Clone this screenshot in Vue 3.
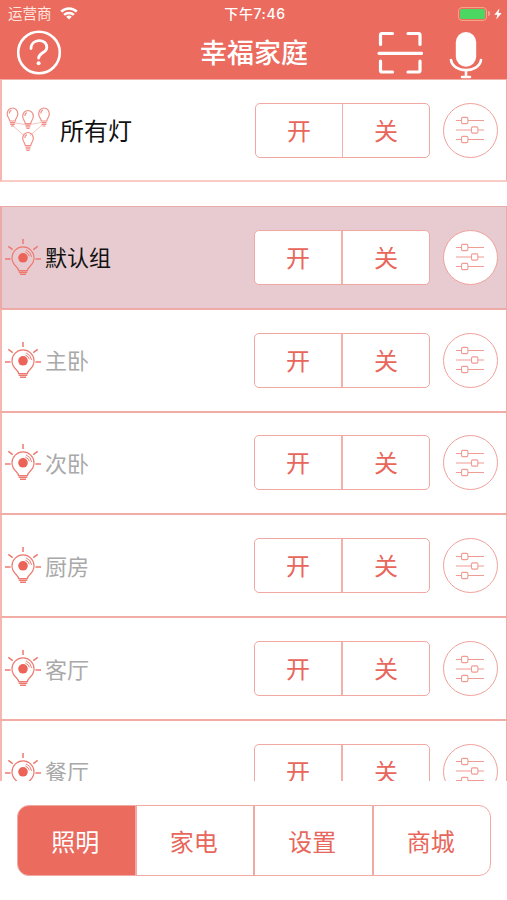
<template>
    <div class="app">
        <header class="header">
            <div class="status">
                <div class="status__left">
                    <span class="carrier">运营商</span>
                    <svg class="wifi" viewBox="0 0 18 13">
                        <path d="M1.2 4.7a11 11 0 0 1 15.6 0" />
                        <path d="M4.1 7.9a7 7 0 0 1 9.8 0" />
                        <path class="solid" d="M6.2 9.8a4 4 0 0 1 5.6 0L9 12.6z" />
                    </svg>
                </div>
                <span class="status__time">下午7:46</span>
                <div class="status__right">
                    <div class="battery"><div class="battery__level"></div></div>
                    <div class="battery-cap"></div>
                    <svg class="bolt" viewBox="0 0 8 12">
                        <path d="M5.4 0.5 0.3 6.8h3L2.3 11.5 7.7 5H4.6z" />
                    </svg>
                </div>
            </div>
            <div class="navbar">
                <svg class="help" viewBox="0 0 46 46">
                    <circle cx="23" cy="22.5" r="20.8" />
                    <path class="mark" d="M15 18.6C15 8.2 30.8 8 30.8 17.4C30.8 23 22.6 22.6 22.6 28.2" />
                    <circle class="dot" cx="22.6" cy="33.2" r="2" />
                </svg>
                <h1 class="title">幸福家庭</h1>
                <svg class="scan" viewBox="0 0 46 44">
                    <path d="M3.5 13.5V4q0-1.5 1.5-1.5h10.5M31 2.5h10.5q1.5 0 1.5 1.5v9.5M3.5 30v9.5q0 1.5 1.5 1.5h10.5M31 41h10.5q1.5 0 1.5-1.5V30M2 22.3h42.5" />
                </svg>
                <svg class="mic" viewBox="0 0 34 48">
                    <rect x="6.8" y="1" width="20.4" height="34.8" rx="10.2" />
                    <path d="M2 29c2.2 13.5 27.8 13.5 30 0M17 39.5V45.5M13 46h8" />
                </svg>
            </div>
        </header>

        <section class="row row--all">
            <svg class="bulbs" viewBox="0 0 46 46">
                <path class="links" d="M8 15.5 22 18M22 18 36 15.5M7 18 19 28.5M37 18 25 28.5" />
                <g v-for="(b, i) in bulbs" :key="i" :transform="`translate(${b.x} ${b.y})`">
                    <path class="glass" d="M-2.8 10.5C-2.8 7.8-5.3 7-5.3 3.3a5.3 5.8 0 0 1 10.6 0C5.3 7 2.8 7.8 2.8 10.5z" />
                    <path class="glass" d="M-2.6 12.2h5.2M-2.3 13.9h4.6M-1.5 15.5h3M-3.2 3Q-3.2.4-1.2-.4" />
                </g>
            </svg>
            <span class="name">所有灯</span>
            <div class="switch">
                <button class="switch__item">开</button>
                <button class="switch__item">关</button>
            </div>
            <button class="adjust">
                <svg viewBox="0 0 28 28">
                    <path d="M0 4.5h5.5M12 4.5h16M0 14h15.5M22 14h6M0 23.5h5.5M12 23.5h16" />
                    <rect x="5.5" y="1.4" width="6.4" height="6.2" rx="1.3" />
                    <rect x="15.5" y="10.9" width="6.4" height="6.2" rx="1.3" />
                    <rect x="5.5" y="20.4" width="6.4" height="6.2" rx="1.3" />
                </svg>
            </button>
        </section>

        <main class="groups">
            <section
                v-for="group in groups"
                :key="group"
                class="row"
                :class="{ selected: group === current }"
                @click="current = group"
            >
                <svg class="bulb" viewBox="0 0 36 37">
                    <path class="rays" d="M18 0v5M0 20h5.6M30.4 20H36M3.3 7.4l4.4 3.2M32.7 7.4l-4.4 3.2" />
                    <path d="M13.6 31.7C13.6 27.8 7 26.5 7 18.9a11 11 0 0 1 22 0C29 26.5 22.4 27.8 22.4 31.7z" />
                    <path class="base" d="M13.7 33.2h8.6M15 35.2h6" />
                    <path class="shine" d="M21 10.9q4.8 1.8 5.6 7M20.4 13.1q3.2 1.2 4 4.2" />
                    <circle class="core" cx="18" cy="18.8" r="4.8" />
                </svg>
                <span class="name">{{ group }}</span>
                <div class="switch">
                    <button class="switch__item">开</button>
                    <button class="switch__item">关</button>
                </div>
                <button class="adjust">
                    <svg viewBox="0 0 28 28">
                        <path d="M0 4.5h5.5M12 4.5h16M0 14h15.5M22 14h6M0 23.5h5.5M12 23.5h16" />
                        <rect x="5.5" y="1.4" width="6.4" height="6.2" rx="1.3" />
                        <rect x="15.5" y="10.9" width="6.4" height="6.2" rx="1.3" />
                        <rect x="5.5" y="20.4" width="6.4" height="6.2" rx="1.3" />
                    </svg>
                </button>
            </section>
        </main>

        <nav class="tabs">
            <button
                v-for="tab in tabs"
                :key="tab"
                class="tab"
                :class="{ active: tab === activeTab }"
                @click="activeTab = tab"
            >
                {{ tab }}
            </button>
        </nav>
    </div>
</template>

<script setup>
import { ref } from 'vue';

const groups = ['默认组', '主卧', '次卧', '厨房', '客厅', '餐厅'];
const current = ref('默认组');

const tabs = ['照明', '家电', '设置', '商城'];
const activeTab = ref('照明');

const bulbs = [
    { x: 7.5, y: 3.5 },
    { x: 23, y: 6 },
    { x: 39, y: 3.5 },
    { x: 23, y: 28 },
];
</script>

<style scoped>
.app {
    width: 507px;
    height: 900px;
    display: flex;
    flex-direction: column;
    overflow: hidden;
    background-color: #fff;
    font-family: 'Liberation Sans', 'Noto Sans CJK SC', sans-serif;
}

svg {
    display: block;
    flex: none;
    fill: none;
    stroke-linecap: butt;
}

button {
    padding: 0;
    border: none;
    background: none;
    font-family: inherit;
    cursor: pointer;
}

.header {
    flex: none;
    height: 79px;
    background-color: #eb6b5f;
    color: #fff;
}

.status {
    display: grid;
    grid-template-columns: 1fr auto 1fr;
    align-items: center;
    height: 27px;
    padding: 0 5px 0 8px;
    font-size: 14.5px;
    line-height: 27px;
}
.status__left {
    display: flex;
    align-items: center;
    gap: 8px;
    color: #ffe6df;
}
.carrier {
    padding-top: 2px;
    line-height: 25px;
}
.status__time {
    font-family: Inter, 'Noto Sans CJK SC', sans-serif;
    font-size: 14px;
    font-weight: 500;
    letter-spacing: 0.6px;
}
.status__right {
    display: flex;
    align-items: center;
    justify-content: flex-end;
}
.wifi {
    width: 18px;
    height: 13px;
    stroke: #fff;
    stroke-width: 2.5;
}
.wifi .solid {
    fill: #fff;
    stroke: none;
}
.battery {
    width: 29px;
    height: 14px;
    padding: 1px;
    box-sizing: border-box;
    border: 1px solid #f7a486;
    border-radius: 4px;
}
.battery__level {
    height: 100%;
    border-radius: 2px;
    background-color: #4cd763;
}
.battery-cap {
    width: 2px;
    height: 5px;
    margin: 0 4px 0 1px;
    border-radius: 0 2px 2px 0;
    background-color: #f5a499;
}
.bolt {
    width: 8px;
    height: 12px;
    fill: #fff;
}

.navbar {
    display: grid;
    grid-template-columns: 46px 1fr 46px 34px;
    height: 52px;
    padding: 0 24px 0 16px;
}
.help {
    width: 46px;
    height: 46px;
    margin-top: 3px;
    stroke: #fff;
    stroke-width: 2.6;
}
.help .mark {
    stroke-width: 2.8;
    stroke-linecap: round;
}
.help .dot {
    fill: #fff;
    stroke: none;
}
.title {
    margin: 0;
    padding-left: 138px;
    font-size: 27px;
    font-weight: 500;
    line-height: 54px;
    white-space: nowrap;
}
.scan {
    width: 46px;
    height: 44px;
    margin-top: 4px;
    margin-left: -26px;
    stroke: #fff;
    stroke-width: 3.2;
    stroke-linecap: round;
}
.mic {
    width: 34px;
    height: 48px;
    margin-top: 4px;
    stroke: #fff;
    stroke-width: 2.6;
    stroke-linecap: round;
}
.mic rect {
    fill: #fff;
    stroke: none;
}

.row {
    flex: none;
    display: flex;
    align-items: center;
    box-sizing: border-box;
    height: 102.8px;
    padding: 0 8.5px 0 3px;
    border: 1px solid #f0aca5;
    border-left: 2px solid #f5b7b2;
}
.row--all {
    height: 103px;
    border-bottom: 2px solid #f9cdc5;
}
.row.selected {
    background-color: #e8cbd0;
    border-color: #e9aaa8;
}
.name {
    flex: 1;
    margin-left: 4px;
    padding-top: 4px;
    color: #a9a9a9;
    font-size: 22px;
    line-height: 32px;
}
.selected .name {
    color: #111;
}
.row--all .name {
    margin-left: 9px;
    color: #111;
    font-size: 24px;
}

.bulb {
    width: 36px;
    height: 37px;
    stroke: #ec7a70;
    stroke-width: 1.2;
}
.bulb .rays {
    stroke-width: 1.5;
}
.bulb .base {
    stroke-width: 1.6;
}
.bulb .shine {
    stroke-width: 1;
}
.bulb .core {
    fill: #eb6457;
    stroke: none;
}
.bulbs {
    width: 46px;
    height: 46px;
}
.bulbs .links {
    stroke: #f6bdb7;
    stroke-width: 0.9;
}
.bulbs .glass {
    stroke: #f08d86;
    stroke-width: 1.2;
}

.switch {
    display: flex;
    box-sizing: border-box;
    width: 176px;
    height: 55px;
    overflow: hidden;
    border: 1px solid #f1a8a2;
    border-radius: 5px;
    background-color: #fff;
}
.switch__item {
    flex: 1;
    padding-top: 3px;
    color: #e8665b;
    font-size: 24px;
    line-height: 50px;
}
.switch__item + .switch__item {
    border-left: 2px solid #f3b1ac;
}
.row--all .switch {
    width: 175px;
}
.row--all .switch__item + .switch__item {
    border-left-width: 1px;
}

.adjust {
    display: flex;
    align-items: center;
    justify-content: center;
    box-sizing: border-box;
    width: 55px;
    height: 55px;
    margin-left: 12.5px;
    border: 1px solid #f0a19a;
    border-radius: 50%;
    background-color: #fff;
}
.adjust svg {
    width: 28px;
    height: 28px;
    stroke: #f09c95;
    stroke-width: 1.1;
}

.groups {
    flex: none;
    height: 575px;
    margin-top: 24px;
    display: flex;
    flex-direction: column;
    overflow: hidden;
}

.tabs {
    display: flex;
    box-sizing: border-box;
    height: 71px;
    margin: 24px 16px 0 17px;
    flex: none;
}
.tab {
    flex: 1;
    box-sizing: border-box;
    padding: 0 2px 1px 0;
    border: 1px solid #f1aaa3;
    color: #e8665b;
    font-size: 24px;
}
.tab:first-child {
    border-radius: 12px 0 0 12px;
}
.tab:last-child {
    border-radius: 0 12px 12px 0;
}
.tab.active {
    background-color: #eb6b5f;
    color: #fff;
}
</style>

<style>
body {
    background-color: #fff;
}
</style>
